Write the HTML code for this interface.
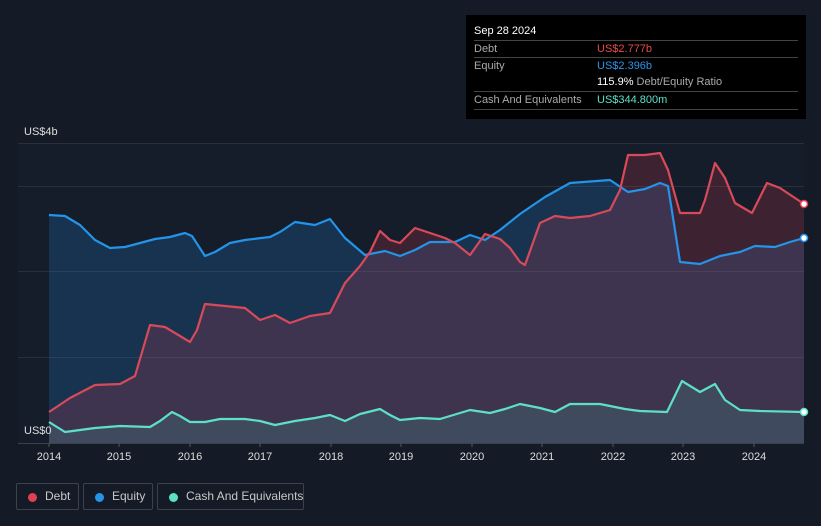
<!DOCTYPE html><html><head><style>
body{margin:0;background:#151b26;font-family:"Liberation Sans",sans-serif;width:821px;height:526px;overflow:hidden;position:relative;color:#ddd}
.tt{position:absolute;left:466px;top:15px;width:340px;height:104px;background:#000;font-size:11px}
.tt .r{position:absolute;left:8px;right:8px;border-top:1px solid #444;height:17px;line-height:17px;color:#aaa}
.tt .v{position:absolute;left:123px}
.leg{position:absolute;top:483px;height:27px;border:1px solid #3c424c;border-radius:2px;font-size:12px;color:#c8c8c8;line-height:25px;box-sizing:border-box;white-space:nowrap}
.leg i{position:absolute;left:11px;top:9px;width:9px;height:9px;border-radius:50%}
.ax{position:absolute;font-size:11px;color:#ddd}
</style></head><body>
<svg width="821" height="526" style="position:absolute;left:0;top:0">
<rect x="18" y="143" width="786" height="300" fill="#161d2a"/>
<g stroke="#2a303b" stroke-width="1"><line x1="18" y1="143.5" x2="804" y2="143.5"/><line x1="18" y1="186.5" x2="804" y2="186.5"/><line x1="18" y1="271.5" x2="804" y2="271.5"/><line x1="18" y1="357.5" x2="804" y2="357.5"/></g>
<path d="M49,215 L65,216 80,225 95,240 110,248 125,247 140,243 155,239 170,237 185,233 192,236 205,256 215,252 230,243 245,240 270,237 280,232 295,222 315,225 330,219 345,238 365,255 385,251 400,256 415,250 430,242 455,242 470,235 485,240 500,230 520,214 545,197 570,183 610,180 628,192 645,189 660,183 668,186 680,262 700,264 720,256 740,252 755,246 775,247 790,242 804,238 L804,443 49,443Z" fill="rgba(33,140,230,0.2)"/>
<path d="M49,412 L70,398 95,385 120,384 135,376 150,325 165,327 180,336 190,342 197,330 205,304 225,306 245,308 260,320 275,315 290,323 310,316 330,313 345,283 360,266 370,252 380,231 390,240 400,243 415,228 430,233 445,238 455,243 470,255 485,234 500,239 510,248 520,262 525,265 540,223 555,216 570,218 590,216 610,210 620,190 628,155 645,155 660,153 668,170 680,213 700,213 705,200 715,163 725,178 735,203 752,213 767,183 780,188 804,204 L804,443 49,443Z" fill="rgba(200,60,80,0.22)"/>
<path d="M49,422 L65,432 95,428 120,426 150,427 160,421 172,412 180,416 190,422 205,422 220,419 245,419 260,421 275,425 295,421 315,418 330,415 345,421 360,414 380,409 390,415 400,420 420,418 440,419 460,413 470,410 490,413 505,409 520,404 540,408 555,412 570,404 600,404 625,409 640,411 667,412 682,381 700,392 715,384 725,400 740,410 760,411 804,412 L804,443 49,443Z" fill="rgba(80,200,180,0.15)"/>
<g fill="none" stroke-width="2.2" stroke-linejoin="round">
<path d="M49,215 L65,216 80,225 95,240 110,248 125,247 140,243 155,239 170,237 185,233 192,236 205,256 215,252 230,243 245,240 270,237 280,232 295,222 315,225 330,219 345,238 365,255 385,251 400,256 415,250 430,242 455,242 470,235 485,240 500,230 520,214 545,197 570,183 610,180 628,192 645,189 660,183 668,186 680,262 700,264 720,256 740,252 755,246 775,247 790,242 804,238" stroke="#2394e8"/>
<path d="M49,412 L70,398 95,385 120,384 135,376 150,325 165,327 180,336 190,342 197,330 205,304 225,306 245,308 260,320 275,315 290,323 310,316 330,313 345,283 360,266 370,252 380,231 390,240 400,243 415,228 430,233 445,238 455,243 470,255 485,234 500,239 510,248 520,262 525,265 540,223 555,216 570,218 590,216 610,210 620,190 628,155 645,155 660,153 668,170 680,213 700,213 705,200 715,163 725,178 735,203 752,213 767,183 780,188 804,204" stroke="#d84a5a"/>
<path d="M49,422 L65,432 95,428 120,426 150,427 160,421 172,412 180,416 190,422 205,422 220,419 245,419 260,421 275,425 295,421 315,418 330,415 345,421 360,414 380,409 390,415 400,420 420,418 440,419 460,413 470,410 490,413 505,409 520,404 540,408 555,412 570,404 600,404 625,409 640,411 667,412 682,381 700,392 715,384 725,400 740,410 760,411 804,412" stroke="#5ee0c8"/>
</g>
<circle cx="804" cy="204" r="3.5" fill="#fff" stroke="#e04050" stroke-width="1.5"/>
<circle cx="804" cy="238" r="3.5" fill="#fff" stroke="#2394e8" stroke-width="1.5"/>
<circle cx="804" cy="412" r="3.5" fill="#fff" stroke="#5ee0c8" stroke-width="1.5"/>
<line x1="18" y1="443.5" x2="804" y2="443.5" stroke="#3a414c"/>
<g stroke="#555"><line x1="49" y1="443" x2="49" y2="447"/><line x1="119" y1="443" x2="119" y2="447"/><line x1="190" y1="443" x2="190" y2="447"/><line x1="260" y1="443" x2="260" y2="447"/><line x1="331" y1="443" x2="331" y2="447"/><line x1="401" y1="443" x2="401" y2="447"/><line x1="472" y1="443" x2="472" y2="447"/><line x1="542" y1="443" x2="542" y2="447"/><line x1="613" y1="443" x2="613" y2="447"/><line x1="683" y1="443" x2="683" y2="447"/><line x1="754" y1="443" x2="754" y2="447"/></g>
<g fill="#ddd" font-size="11" text-anchor="middle" font-family="Liberation Sans"><text x="49" y="460">2014</text><text x="119" y="460">2015</text><text x="190" y="460">2016</text><text x="260" y="460">2017</text><text x="331" y="460">2018</text><text x="401" y="460">2019</text><text x="472" y="460">2020</text><text x="542" y="460">2021</text><text x="613" y="460">2022</text><text x="683" y="460">2023</text><text x="754" y="460">2024</text></g>
</svg>
<div class="ax" style="left:24px;top:126px">US$4b</div>
<div class="ax" style="left:24px;top:425px">US$0</div>
<div class="tt">
<div style="position:absolute;left:8px;top:10px;color:#fff">Sep 28 2024</div>
<div class="r" style="top:25px">Debt<span class="v" style="color:#e84a4a">US$2.777b</span></div>
<div class="r" style="top:42px">Equity<span class="v" style="color:#2a95e8">US$2.396b</span></div>
<div class="r" style="top:59px;border-top:none"><span class="v"><b style="color:#fff;font-weight:normal">115.9%</b> Debt/Equity Ratio</span></div>
<div class="r" style="top:76px">Cash And Equivalents<span class="v" style="color:#5ee0c8">US$344.800m</span></div>
<div class="r" style="top:94px;height:0"></div>
</div>
<div class="leg" style="left:16px;width:63px"><i style="background:#e04050"></i><span style="margin-left:28px">Debt</span></div>
<div class="leg" style="left:83px;width:70px"><i style="background:#2394e8"></i><span style="margin-left:28px">Equity</span></div>
<div class="leg" style="left:157px;width:147px"><i style="background:#5ee0c8"></i><span style="margin-left:28px">Cash And Equivalents</span></div>
</body></html>
